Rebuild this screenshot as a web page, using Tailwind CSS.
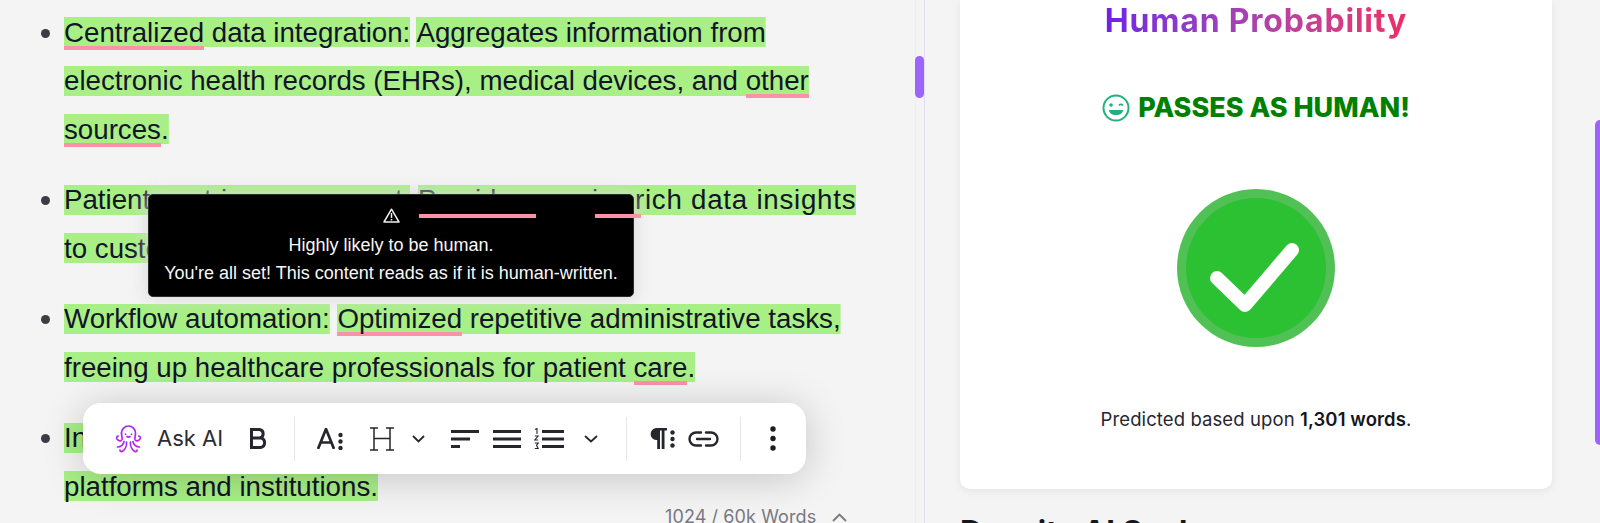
<!DOCTYPE html>
<html lang="en">
<head>
<meta charset="UTF-8">
<title>Human Probability</title>
<script src="https://cdn.jsdelivr.net/npm/@tailwindcss/browser@4"></script>
</head>
<body class="h-[523px] overflow-hidden bg-[#f4f4f4] font-['Liberation_Sans',sans-serif]">
<div class="flex h-[523px] overflow-hidden">

  <!-- editor -->
  <div class="relative w-[925px] h-[523px] shrink-0 overflow-hidden border-r border-[#e2e0f0]">
    <ul class="pl-[64px] pt-[8.5px] w-[870px] text-[27.7px] leading-[48.5px] text-[#141428]">
      <li class="relative">
        <span class="absolute left-[-23px] top-[20px] w-[9px] h-[9px] rounded-full bg-[#3c3c44]"></span>
        <span class="box-decoration-clone bg-[linear-gradient(#a8f086,#a8f086)] bg-no-repeat bg-center bg-[length:100%_30px]"><span class="box-decoration-clone pb-[2px] bg-[linear-gradient(#fb92a8,#fb92a8)] bg-no-repeat bg-bottom bg-[length:100%_4px]">Centralized</span> data integration:</span> <span class="box-decoration-clone bg-[linear-gradient(#a8f086,#a8f086)] bg-no-repeat bg-center bg-[length:100%_30px]">Aggregates information from electronic health records (EHRs), medical devices, and <span class="box-decoration-clone pb-[2px] bg-[linear-gradient(#fb92a8,#fb92a8)] bg-no-repeat bg-bottom bg-[length:100%_4px]">other</span></span> <span class="box-decoration-clone bg-[linear-gradient(#a8f086,#a8f086)] bg-no-repeat bg-center bg-[length:100%_30px]"><span class="box-decoration-clone pb-[2px] bg-[linear-gradient(#fb92a8,#fb92a8)] bg-no-repeat bg-bottom bg-[length:100%_4px]">sources</span>.</span>
      </li>
      <li class="relative mt-[22px]">
        <span class="absolute left-[-23px] top-[20px] w-[9px] h-[9px] rounded-full bg-[#3c3c44]"></span>
        <span class="box-decoration-clone bg-[linear-gradient(#a8f086,#a8f086)] bg-no-repeat bg-center bg-[length:100%_30px]">Patient-centric engagement:</span> <span class="box-decoration-clone bg-[linear-gradient(#a8f086,#a8f086)] bg-no-repeat bg-center bg-[length:100%_30px]">Provides concise <span class="tracking-[0.75px]">rich data insights</span> to customize patient care plans.</span>
      </li>
      <li class="relative mt-[22px]">
        <span class="absolute left-[-23px] top-[20px] w-[9px] h-[9px] rounded-full bg-[#3c3c44]"></span>
        <span class="box-decoration-clone bg-[linear-gradient(#a8f086,#a8f086)] bg-no-repeat bg-center bg-[length:100%_30px]">Workflow automation:</span> <span class="box-decoration-clone bg-[linear-gradient(#a8f086,#a8f086)] bg-no-repeat bg-center bg-[length:100%_30px]"><span class="box-decoration-clone pb-[2px] bg-[linear-gradient(#fb92a8,#fb92a8)] bg-no-repeat bg-bottom bg-[length:100%_4px]">Optimized</span> repetitive administrative tasks, freeing up healthcare professionals for patient <span class="box-decoration-clone pb-[2px] bg-[linear-gradient(#fb92a8,#fb92a8)] bg-no-repeat bg-bottom bg-[length:100%_4px]">care</span>.</span>
      </li>
      <li class="relative mt-[22px]">
        <span class="absolute left-[-23px] top-[20px] w-[9px] h-[9px] rounded-full bg-[#3c3c44]"></span>
        <span class="box-decoration-clone bg-[linear-gradient(#a8f086,#a8f086)] bg-no-repeat bg-center bg-[length:100%_30px]">Interoperability: Connects data across different<br>platforms and institutions.</span>
      </li>
    </ul>

    <!-- scroll track and thumb -->
    <div class="absolute left-[915px] top-0 w-px h-full bg-[#eeedf4]"></div>
    <div class="absolute left-[915px] top-[56px] w-[9px] h-[42px] rounded-full bg-[#9c64f8]"></div>

    <!-- tooltip -->
    <div class="absolute left-[148px] top-[194px] w-[486px] h-[103px] rounded-[5px] border border-[#2c2c2c] bg-black flex flex-col items-center pt-[13px] text-[#f8f8f8] text-[18px] leading-[28px] shadow-[0_0_16px_2px_rgba(215,215,215,0.85)]">
      <svg class="w-[17px] h-[15px] mb-[8px]" viewBox="0 0 17 15" fill="none" stroke="#eee" stroke-width="1.5" stroke-linejoin="round"><path d="M8.5 1.2 16 14H1Z"/><path d="M8.5 5v5M8.5 11v1.4"/></svg>
      <p>Highly likely to be human.</p>
      <p>You're all set! This content reads as if it is human-written.</p>
      <span class="absolute left-[270px] top-[19px] w-[117px] h-[4px] bg-[#fb92a8]"></span>
      <span class="absolute left-[446px] top-[19px] w-[46px] h-[4px] bg-[#fb92a8]"></span>
    </div>

    <!-- toolbar -->
    <div class="absolute left-[83px] top-[403px] w-[723px] h-[71px] rounded-[18px] bg-white flex items-center shadow-[0_4px_40px_rgba(0,0,0,0.2)] text-[#26262e]">
      <svg class="ml-[32px] w-[27px] h-[29px] shrink-0" viewBox="0 0 27 29" fill="none" stroke="url(#octo)" stroke-width="1.700" stroke-linecap="round" stroke-linejoin="round">
        <defs><linearGradient id="octo" x1="0" y1="0" x2="0" y2="1"><stop offset="0" stop-color="#9a2cf5"/><stop offset="1" stop-color="#c020e8"/></linearGradient></defs>
        <path d="M6.500 9a7 7 0 0 1 14 0c0 3-1 4.500-.5 6.500.6 1.800 3.500 1.800 5-.5.800-1.300.2-2.800-1.200-3"/>
        <path d="M6.500 9c0 3 1 4.500.5 6.500-.6 1.800-3.500 1.800-5-.5-.8-1.300-.2-2.800 1.200-3"/>
        <path d="M9 17.500c-.5 3-3 5.500-6.500 5.500M18 17.500c.5 3 3 5.500 6.500 5.500"/>
        <path d="M11.500 18c.5 4-1.500 8-4.500 9.500-1.200.5-2.200-.3-2-1.500M15.500 18c-.5 4 1.500 8 4.500 9.500 1.200.5 2.200-.3 2-1.500"/>
        <path d="M12 12.500c1 .7 2 .7 3 0M10.500 10v.2M16.500 10v.2"/>
      </svg>
      <span class="ml-[15px] w-[65px] shrink-0 whitespace-nowrap text-[22px] font-['Inter',sans-serif] text-[#2c2c34]">Ask AI</span>
      <svg class="ml-[28px] w-[17px] h-[21px] shrink-0" viewBox="0 0 17 21" fill="none" stroke="#26262e" stroke-width="3"><path d="M1.500 1.500h8a4.300 4.300 0 0 1 0 8.500h-8zM1.500 10h9a4.800 4.800 0 0 1 0 9.500h-9z"/></svg>
      <div class="ml-[27px] w-px h-[44px] shrink-0 bg-[#e6e6e8]"></div>
      <svg class="ml-[22px] w-[18px] h-[21px] shrink-0" viewBox="0 0 18 21" fill="none" stroke="#26262e" stroke-width="2.700"><path d="M1 21 9 1l8 20M3.500 14.500h11"/></svg>
      <svg class="ml-[3px] w-[5px] h-[18px] mt-[4px] shrink-0" viewBox="0 0 5 18" fill="#26262e"><circle cx="2.500" cy="3" r="2.200"/><circle cx="2.500" cy="9.500" r="2.200"/><circle cx="2.500" cy="16" r="2.200"/></svg>
      <svg class="ml-[27px] w-[24px] h-[24px] shrink-0" viewBox="0 0 24 24" fill="none" stroke="#26262e" stroke-width="1.500"><path d="M4 1v22M20 1v22M4 11.500h16M0 1h8M16 1h8M0 23h8M16 23h8"/></svg>
      <svg class="ml-[18px] w-[13px] h-[8px] shrink-0" viewBox="0 0 13 8" fill="none" stroke="#26262e" stroke-width="1.800"><path d="M1 1l5.500 5.500L12 1"/></svg>
      <svg class="ml-[26px] w-[28px] h-[18px] shrink-0" viewBox="0 0 28 18" fill="#26262e"><rect width="28" height="3"/><rect y="7.500" width="19" height="3"/><rect y="15" width="9" height="3"/></svg>
      <svg class="ml-[14px] w-[28px] h-[18px] shrink-0" viewBox="0 0 28 18" fill="#26262e"><rect width="28" height="3"/><rect y="7.500" width="28" height="3"/><rect y="15" width="28" height="3"/></svg>
      <svg class="ml-[13px] w-[30px] h-[21px] shrink-0" viewBox="0 0 30 21" fill="none"><path d="M1 1.500l2-1v5.500M.8 8h3.400L.8 12h3.400M.8 15h3.400L2.500 17.300 4.200 20.500H.8" stroke="#26262e" stroke-width="1.100"/><path d="M8 2h22v3H8zM8 9.500h22v3H8zM8 17h22v3H8z" fill="#26262e"/></svg>
      <svg class="ml-[20px] w-[14px] h-[8px] shrink-0" viewBox="0 0 14 8" fill="none" stroke="#26262e" stroke-width="1.800"><path d="M1 1l6 5.500L13 1"/></svg>
      <div class="ml-[28px] w-px h-[44px] shrink-0 bg-[#e6e6e8]"></div>
      <svg class="ml-[22px] w-[18px] h-[21px] shrink-0" viewBox="0 0 18 21" fill="#26262e"><path d="M7 0h11v2.500h-2.500V21h-2.800V2.500h-1.700V21H8.200V12A6 6 0 0 1 7 0Z"/></svg>
      <svg class="ml-[3px] w-[5px] h-[18px] shrink-0" viewBox="0 0 5 18" fill="#26262e"><circle cx="2.500" cy="2.500" r="2.200"/><circle cx="2.500" cy="9" r="2.200"/><circle cx="2.500" cy="15.500" r="2.200"/></svg>
      <svg class="ml-[13px] w-[31px] h-[16px] shrink-0" viewBox="0 0 31 16" fill="none" stroke="#26262e" stroke-width="2.400" stroke-linecap="round"><path d="M13 1.500H8a6.500 6.500 0 0 0 0 13h5M18 1.500h5a6.500 6.500 0 0 1 0 13h-5M9 8h13"/></svg>
      <div class="ml-[21px] w-px h-[44px] shrink-0 bg-[#e6e6e8]"></div>
      <svg class="ml-[29px] w-[6px] h-[25px] shrink-0" viewBox="0 0 6 25" fill="#1c1c24"><circle cx="3" cy="3" r="2.700"/><circle cx="3" cy="12.500" r="2.700"/><circle cx="3" cy="22" r="2.700"/></svg>
    </div>

    <!-- word count -->
    <div class="absolute left-[665px] top-[504px] flex items-center whitespace-nowrap font-['Inter',sans-serif] text-[18px] tracking-[0.1px] leading-[26px] text-[#787882]">
      <span>1024 / 60k Words</span>
      <svg class="ml-[16px] w-[15px] h-[9px]" viewBox="0 0 15 9" fill="none" stroke="#787882" stroke-width="1.800"><path d="M1 8l6.500-6.500L14 8"/></svg>
    </div>
  </div>

  <!-- results -->
  <div class="relative flex-1 h-[523px] overflow-hidden pl-[35px] pr-[48px]">
    <div class="h-[489px] rounded-b-[10px] bg-white shadow-[0_2px_8px_rgba(0,0,0,0.07)] flex flex-col items-center font-['Inter',sans-serif]">
      <h2 class="mt-[2px] text-[32px] leading-[38px] font-bold tracking-[0.8px] whitespace-nowrap bg-gradient-to-r from-[#6f1fe8] to-[#f02a62] bg-clip-text text-transparent">Human Probability</h2>
      <div class="mt-[51px] flex items-center text-[#008000]">
        <svg class="w-[28px] h-[28px]" viewBox="0 0 28 28" fill="none" stroke="#24b07c" stroke-width="2"><circle cx="14" cy="14" r="12.500"/><circle cx="9" cy="11" r="1.800" fill="#24b07c" stroke="none"/><path d="M17 11.500c1-1.500 3-1.500 4 0" stroke-width="1.600"/><path d="M7 16h14c0 3-3 5-7 5s-7-2-7-5Z" fill="#24b07c" stroke="none"/></svg>
        <span class="ml-[8px] text-[27px] leading-[34px] font-extrabold whitespace-nowrap">PASSES AS HUMAN!</span>
      </div>
      <svg class="mt-[64px] w-[158px] h-[158px] shrink-0" viewBox="0 0 158 158" fill="none">
        <circle cx="79" cy="79" r="79" fill="#51c155"/>
        <circle cx="79" cy="79" r="70" fill="#2cc133"/>
        <path d="M40 89l28 27L115 61" stroke="#fff" stroke-width="14" stroke-linecap="round" stroke-linejoin="round"/>
      </svg>
      <p class="mt-[59px] text-[18.500px] tracking-[0.1px] leading-[26px] whitespace-nowrap text-[#26262e]">Predicted based upon <b class="font-semibold text-[#16161e]">1,301 words</b>.</p>
    </div>
    <h3 class="mt-[25px] text-[31px] leading-[36px] font-bold whitespace-nowrap font-['Inter',sans-serif] text-[#16161e]">Despite AI Scale</h3>
    <div class="absolute right-0 top-[120px] w-[5px] h-[325px] rounded-l-full bg-[#9c64f8]"></div>
  </div>
</div>
</body>
</html>
